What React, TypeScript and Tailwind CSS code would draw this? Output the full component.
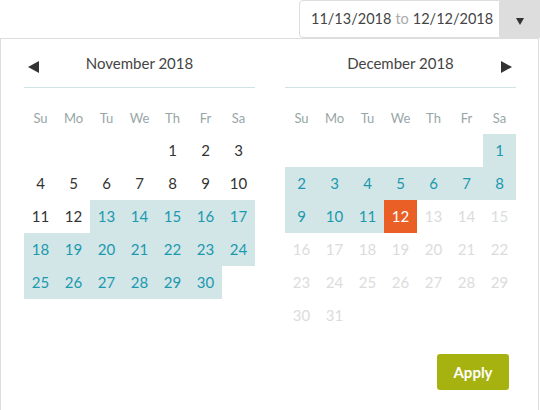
import React from 'react';

type Cell = { d: number; kind: 'normal' | 'range' | 'selected' | 'disabled' } | null;

// build a month grid: offset = weekday of the 1st, total days, and a fn telling each day's state
const buildMonth = (offset: number, total: number, kindOf: (d: number) => 'normal' | 'range' | 'selected' | 'disabled') => {
  const cells: Cell[] = [];
  for (let i = 0; i < offset; i++) cells.push(null);
  for (let d = 1; d <= total; d++) cells.push({ d, kind: kindOf(d) });
  while (cells.length % 7 !== 0) cells.push(null);
  const rows: Cell[][] = [];
  for (let i = 0; i < cells.length; i += 7) rows.push(cells.slice(i, i + 7));
  return rows;
};

const novRows = buildMonth(4, 30, (d) => (d >= 13 ? 'range' : 'normal'));
const decRows = buildMonth(6, 31, (d) => (d < 12 ? 'range' : d === 12 ? 'selected' : 'disabled'));

const DAYS = ['Su', 'Mo', 'Tu', 'We', 'Th', 'Fr', 'Sa'];

function DayCell({ cell }: { cell: Cell }) {
  if (!cell) return <div className="h-[33px] w-[33px]" />;
  const styles = {
    normal: 'text-[#333]',
    range: 'bg-[#d2e6e8] text-[#1b99ae]',
    selected: 'bg-[#e95f26] text-white',
    disabled: 'text-[#dcdcdc]',
  }[cell.kind];
  return (
    <div className={`flex h-[33px] w-[33px] items-center justify-center text-[15px] ${styles}`}>
      {cell.d}
    </div>
  );
}

function Month({ title, rows, arrow }: { title: string; rows: Cell[][]; arrow: 'left' | 'right' }) {
  return (
    <div className="w-[231px]">
      <div className="relative flex h-[49px] items-center justify-center border-b border-[#cfe3e6]">
        {arrow === 'left' && (
          <svg className="absolute left-[4px] top-[22px]" width="11" height="12" viewBox="0 0 11 12">
            <path d="M11 0 L0 6 L11 12 Z" fill="#333" />
          </svg>
        )}
        <span className="text-[15px] text-[#444]">{title}</span>
        {arrow === 'right' && (
          <svg className="absolute right-[4px] top-[22px]" width="11" height="12" viewBox="0 0 11 12">
            <path d="M0 0 L11 6 L0 12 Z" fill="#333" />
          </svg>
        )}
      </div>
      <div className="mt-[15px] grid grid-cols-7">
        {DAYS.map((d) => (
          <div key={d} className="flex h-[31px] items-center justify-center text-[13px] text-[#98a6a6]">
            {d}
          </div>
        ))}
      </div>
      <div className="flex flex-col">
        {rows.map((r, i) => (
          <div key={i} className="flex">
            {r.map((c, j) => (
              <DayCell key={j} cell={c} />
            ))}
          </div>
        ))}
      </div>
    </div>
  );
}

export default function App() {
  return (
    <div className="relative h-[410px] w-[540px] overflow-hidden bg-white font-['Lato','Liberation_Sans',sans-serif]">
      {/* date range input */}
      <div className="flex h-[38px] justify-end">
        <div className="flex w-[201px] items-center rounded-l-[4px] border border-[#ddd] pl-[11px] text-[14.5px] text-[#444]">
          <span>11/13/2018</span>
          <span className="mx-[4px] text-[#aaa]">to</span>
          <span>12/12/2018</span>
        </div>
        <div className="flex w-[40px] items-center justify-center bg-[#ddd] pt-[5px]">
          <svg width="8" height="7" viewBox="0 0 8 7">
            <path d="M0 0 L8 0 L4 7 Z" fill="#333" />
          </svg>
        </div>
      </div>

      {/* popup */}
      <div className="w-[539px] border border-[#ddd] pb-[30px]">
        <div className="flex gap-[30px] pl-[23px]">
          <Month title="November 2018" rows={novRows} arrow="left" />
          <Month title="December 2018" rows={decRows} arrow="right" />
        </div>
        <div className="mt-[22px] flex justify-end pr-[29px]">
          <button className="h-[36px] w-[72px] rounded-[3px] bg-[#a5b20f] text-[15px] font-bold text-white">
            Apply
          </button>
        </div>
      </div>
    </div>
  );
}
